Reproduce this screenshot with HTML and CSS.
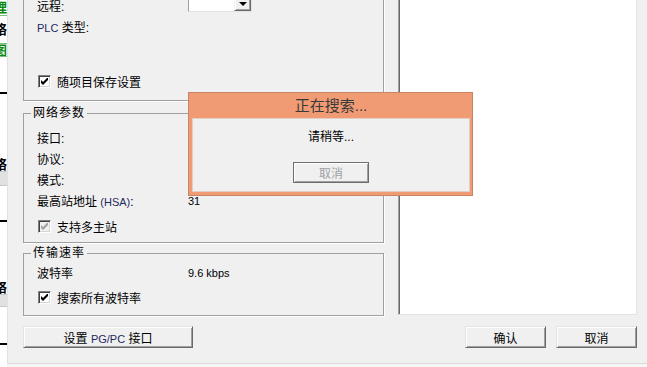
FILE: index.html
```html
<!DOCTYPE html>
<html lang="zh-CN">
<head>
    <meta charset="UTF-8">
    <title>设置 PG/PC 接口</title>
    <link rel="stylesheet" href="styles.css">
</head>
<body>
<div class="screen">

    <!-- window behind, only its edge is visible -->
    <div class="strip">
        <div class="frag green first">理</div>
        <div class="frag second">络</div>
        <div class="frag green boxed">图</div>
        <div class="rule r1"></div>
        <div class="frag third">络</div>
        <div class="bar"></div>
        <div class="rule r2"></div>
        <div class="frag fourth">络</div>
        <div class="bar small"></div>
        <div class="rule r3"></div>
    </div>

    <div class="window">
        <div class="left">
            <div class="group group-top">
                <div class="row">
                    <span>远程:</span>
                    <div class="combo"><span class="combo-btn"></span></div>
                </div>
                <div class="row">
                    <span><span class="lat">PLC</span> 类型:</span>
                </div>
                <label class="row check-row last">
                    <span class="check on"></span>
                    <span>随项目保存设置</span>
                </label>
            </div>

            <fieldset class="group net">
                <legend>网络参数</legend>
                <div class="row"><span>接口:</span></div>
                <div class="row"><span>协议:</span></div>
                <div class="row"><span>模式:</span></div>
                <div class="row"><span>最高站地址 <span class="lat">(HSA)</span>:</span><span class="val">31</span></div>
                <label class="row check-row gap5">
                    <span class="check on disabled"></span>
                    <span>支持多主站</span>
                </label>
            </fieldset>

            <fieldset class="group rate">
                <legend>传输速率</legend>
                <div class="row"><span>波特率</span><span class="val">9.6 kbps</span></div>
                <label class="row check-row gap4">
                    <span class="check on"></span>
                    <span>搜索所有波特率</span>
                </label>
            </fieldset>

            <button class="btn btn-wide">设置 <span class="lat">PG/PC</span> 接口</button>
        </div>

        <div class="right">
            <div class="listbox"></div>
            <div class="actions">
                <button class="btn">确认</button>
                <button class="btn">取消</button>
            </div>
        </div>
    </div>

    <!-- searching popup -->
    <div class="dialog">
        <div class="dialog-title">正在搜索...</div>
        <div class="dialog-body">
            <p>请稍等...</p>
            <button class="btn btn-off" disabled>取消</button>
        </div>
    </div>
</div>
</body>
</html>
```

FILE: styles.css
```css
/* Reset */
* {
    margin: 0;
    padding: 0;
    box-sizing: border-box;
}

body {
    width: 647px;
    height: 367px;
    overflow: hidden;
    font-family: "Liberation Sans", "Noto Sans CJK SC", sans-serif;
    font-size: 12px;
    color: #000;
    background-color: #f6f6f6;
}

.screen {
    position: relative;
    display: flex;
    height: 367px;
}

/* Edge of the window behind */
.strip {
    width: 7px;
    height: 367px;
    background-color: #fff;
    overflow: hidden;
    display: flex;
    flex-direction: column;
}

.frag {
    font-size: 13px;
    font-weight: bold;
    white-space: nowrap;
    text-indent: -6px;
    overflow: hidden;
}

.frag.green {
    color: #0a8a0a;
}

.first {
    height: 16px;
    line-height: 16px;
    border-bottom: 1px solid #7cc07c;
}

.second {
    height: 27px;
    line-height: 28px;
}

.boxed {
    height: 14px;
    line-height: 13px;
    border-top: 1px solid #7cc07c;
    border-bottom: 1px solid #7cc07c;
}

.rule {
    height: 2px;
    background-color: #000;
    flex: none;
}

.r1 { margin-top: 35px; }
.r2 { margin-top: 34px; }
.r3 { margin-top: 36px; }

.third {
    margin-top: 64px;
    height: 13px;
    line-height: 13px;
}

.fourth {
    margin-top: 60px;
    height: 12px;
    line-height: 12px;
}

.bar {
    height: 15px;
    background-color: #e1e1e1;
    border-top: 1px solid #c8c8c8;
    border-bottom: 1px solid #c8c8c8;
    flex: none;
}

.bar.small {
    height: 13px;
}

/* Main dialog window */
.window {
    flex: 1;
    height: 364px;
    background-color: #f0f0f0;
    border-left: 1px solid #e2e2e2;
    border-bottom: 1px solid #d9d9d9;
    display: flex;
    gap: 14px;
    padding: 0 10px 0 15px;
    overflow: hidden;
}

.left {
    width: 361px;
    flex: none;
    display: flex;
    flex-direction: column;
}

.right {
    width: 239px;
    flex: none;
    display: flex;
    flex-direction: column;
}

/* Group boxes */
.group {
    border: 1px solid #a0a0a0;
    box-shadow: 1px 1px 0 #fff;
    min-width: 0;
}

.group legend {
    margin-left: -6px;
    padding: 0 2px;
    line-height: 14px;
    letter-spacing: 1px;
}

.group-top {
    height: 121px;
    margin-top: -20px;
    padding: 14px 12px 8px 13px;
    display: flex;
    flex-direction: column;
}

.net {
    margin-top: 5px;
    padding: 7px 12px 5px 13px;
}

.rate {
    margin-top: 3px;
    padding: 2px 12px 7px 13px;
}

.row {
    display: grid;
    grid-template-columns: 151px 1fr;
    height: 21px;
    align-items: center;
}

.lat {
    font-size: 11px;
    color: #1f2a5e;
}

.val {
    font-size: 11px;
}

.check-row {
    display: flex;
    align-items: center;
    gap: 6px;
    padding-left: 1px;
}

.last {
    margin-top: auto;
}

.gap5 { margin-top: 5px; }
.gap4 { margin-top: 4px; }

/* Classic checkbox */
.check {
    width: 13px;
    height: 13px;
    background-color: #fff;
    border: 1px solid;
    border-color: #808080 #fff #fff #808080;
    box-shadow: inset 1px 1px 0 #404040, inset -1px -1px 0 #d4d4d4;
    position: relative;
}

.check.on::after {
    content: "";
    position: absolute;
    left: 2px;
    top: 2px;
    width: 7px;
    height: 7px;
    background: no-repeat center / 7px 7px;
    background-image: url("data:image/svg+xml,%3Csvg xmlns='http://www.w3.org/2000/svg' viewBox='0 0 7 7'%3E%3Cpath d='M0 2v3l2 2l5-5v-3l-5 5z' fill='%23000'/%3E%3C/svg%3E");
}

.check.disabled {
    background-color: #f0f0f0;
}

.check.disabled::after {
    background-image: url("data:image/svg+xml,%3Csvg xmlns='http://www.w3.org/2000/svg' viewBox='0 0 7 7'%3E%3Cpath d='M0 2v3l2 2l5-5v-3l-5 5z' fill='%23a0a0a0'/%3E%3C/svg%3E");
}

/* Combo box (cut off at the top) */
.combo {
    width: 64px;
    height: 17px;
    align-self: start;
    background-color: #fff;
    border: 1px solid;
    border-color: #a0a0a0 #e3e3e3 #e3e3e3 #a0a0a0;
    display: flex;
    justify-content: flex-end;
}

.combo-btn {
    width: 17px;
    height: 15px;
    background-color: #f0f0f0;
    border: 1px solid;
    border-color: #f0f0f0 #696969 #696969 #f0f0f0;
    box-shadow: inset 1px 1px 0 #fff, inset -1px -1px 0 #a0a0a0;
    display: flex;
    justify-content: center;
    align-items: center;
}

.combo-btn::after {
    content: "";
    border-left: 4px solid transparent;
    border-right: 4px solid transparent;
    border-top: 4px solid #000;
}

/* Buttons */
.btn {
    font-family: inherit;
    font-size: 12px;
    color: #000;
    height: 22px;
    background-color: #f0f0f0;
    border: 1px solid;
    border-color: #e3e3e3 #696969 #696969 #e3e3e3;
    box-shadow: inset 1px 1px 0 #fff, inset -1px -1px 0 #a0a0a0;
}

.btn-wide {
    width: 170px;
    margin-top: 10px;
}

.listbox {
    height: 318px;
    margin-top: -3px;
    background-color: #fff;
    border: 1px solid;
    border-color: #a0a0a0 #e3e3e3 #e3e3e3 #a0a0a0;
    box-shadow: inset 1px 1px 0 #696969;
    flex: none;
}

.actions {
    display: flex;
    justify-content: flex-end;
    gap: 10px;
    margin-top: 11px;
}

.actions .btn {
    width: 81px;
}

/* Searching popup */
.dialog {
    position: absolute;
    left: 188px;
    top: 92px;
    width: 285px;
    height: 104px;
    background-color: #f19b74;
    border: 1px solid #c98463;
    padding: 0 2px 3px 3px;
    display: flex;
    flex-direction: column;
}

.dialog-title {
    height: 25px;
    line-height: 25px;
    text-align: center;
    font-size: 15px;
    color: #3a3a3a;
}

.dialog-body {
    flex: 1;
    background-color: #f0f0f0;
    border: 1px solid #e2cfc4;
    display: flex;
    flex-direction: column;
    align-items: center;
    padding-top: 11px;
}

.dialog-body p {
    line-height: 14px;
}

.btn-off {
    width: 76px;
    height: 21px;
    margin-top: 18px;
    color: #a0a0a0;
    border-color: #6d6d6d;
    box-shadow: inset 1px 1px 0 #fff, inset -1px -1px 0 #a0a0a0;
}
```
